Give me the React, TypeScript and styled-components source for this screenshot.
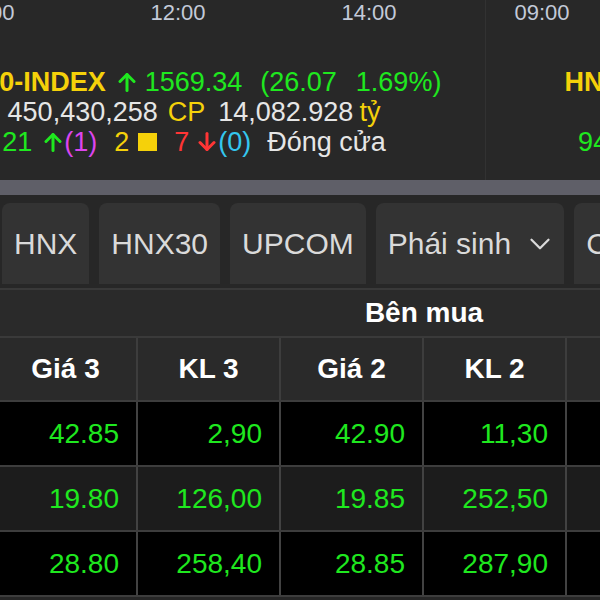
import styled, { createGlobalStyle } from 'styled-components';
import { ChevronDown } from 'lucide-react';

const GlobalStyle = createGlobalStyle`
  body {
    margin: 0;
    background: #262626;
    font-family: "Liberation Sans", Arial, sans-serif;
  }
`;

const YELLOW = '#f5d10a';
const GREEN = '#1fe81f';
const WHITE = '#e6e6e6';
const RED = '#ff3535';
const MAGENTA = '#dc45ee';
const CYAN = '#34c6ee';

const Page = styled.div`
  width: 600px;
  height: 600px;
  overflow: hidden;
  background: #262626;
`;

const Boards = styled.div`
  display: flex;
  height: 180px;
  background: #282828;
`;

const IndexPanel = styled.div<{ $width: number; $offset?: number; $divider?: boolean }>`
  flex-shrink: 0;
  width: ${p => p.$width}px;
  margin-left: ${p => p.$offset ?? 0}px;
  border-left: ${p => (p.$divider ? '1px solid #323232' : 'none')};
  display: flex;
  flex-direction: column;
`;

const Axis = styled.svg`
  display: block;
  height: 26px;
  font-size: 22px;
  fill: #c3cad8;
`;

const Info = styled.div`
  margin-top: 41px;
  display: flex;
  flex-direction: column;
  align-items: center;
  font-size: 27px;
  line-height: 30px;
`;

const Line = styled.div`
  display: flex;
  align-items: center;
  white-space: nowrap;
`;

const Seg = styled.span<{ $color: string; $ml?: number; $bold?: boolean }>`
  color: ${p => p.$color};
  margin-left: ${p => p.$ml ?? 0}px;
  font-weight: ${p => (p.$bold ? 700 : 400)};
`;

const ArrowBox = styled.svg<{ $ml?: number }>`
  display: block;
  flex-shrink: 0;
  margin-left: ${p => p.$ml ?? 0}px;
`;

const Square = styled.span<{ $ml?: number }>`
  display: block;
  width: 19px;
  height: 18px;
  background: ${YELLOW};
  margin-left: ${p => p.$ml ?? 0}px;
`;

const ScrollTrack = styled.div`
  height: 15px;
  background: #5f5f68;
`;

const TabBar = styled.div`
  display: flex;
  gap: 10px;
  padding: 8px 0 4px 2px;
  background: #272727;
  border-bottom: 2px solid #393939;
`;

const Tab = styled.div`
  flex-shrink: 0;
  height: 81px;
  display: flex;
  align-items: center;
  gap: 12px;
  padding: 0 12px;
  background: #333333;
  border-radius: 8px 8px 0 0;
  color: #dadada;
  font-size: 30px;
  white-space: nowrap;

  svg {
    margin-right: -5px;
  }
`;

const Table = styled.div`
  margin-left: -5px;
  width: 858px;
  background: #2a2a2a;
`;

const GroupRow = styled.div`
  height: 46px;
  display: flex;
  align-items: center;
  justify-content: center;
  border-bottom: 2px solid #3a3a3a;
  color: #ffffff;
  font-size: 28px;
  font-weight: 700;
`;

const Row = styled.div<{ $bg: string; $height: number }>`
  display: flex;
  height: ${p => p.$height}px;
  background: ${p => p.$bg};
  border-bottom: 2px solid #3d3d3d;
`;

const HeadCell = styled.div`
  box-sizing: border-box;
  width: 143px;
  flex-shrink: 0;
  border-right: 2px solid #3d3d3d;
  display: flex;
  align-items: center;
  justify-content: center;
  color: #ffffff;
  font-size: 28px;
  font-weight: 700;
`;

const Cell = styled.div`
  box-sizing: border-box;
  width: 143px;
  flex-shrink: 0;
  border-right: 2px solid #424242;
  display: flex;
  align-items: center;
  justify-content: flex-end;
  padding-right: 17px;
  color: ${GREEN};
  font-size: 28px;
`;

function Arrow({ dir, color, ml }: { dir: 'up' | 'down'; color: string; ml?: number }) {
  return (
    <ArrowBox $ml={ml} width="18" height="20" viewBox="0 0 18 20" fill="none" stroke={color}
      strokeWidth="3" strokeLinecap="round" strokeLinejoin="round"
      style={{ transform: dir === 'down' ? 'rotate(180deg)' : undefined }}>
      <path d="M9 18.5V2.5" />
      <path d="M2 9.5 9 2.5l7 7" />
    </ArrowBox>
  );
}

type Board = {
  width: number;
  offset?: number;
  divider?: boolean;
  ticks: { x: number; label: string }[];
  name: string;
  value: string;
  change: string;
  pct: string;
  volume: string;
  turnover: string;
  up: string;
  ceil: string;
  flat: string;
  down: string;
  floor: string;
};

const boards: Board[] = [
  {
    width: 582, offset: -97,
    ticks: [{ x: 84, label: '10:00' }, { x: 275, label: '12:00' }, { x: 466, label: '14:00' }],
    name: 'VN30-INDEX', value: '1569.34', change: '(26.07', pct: '1.69%)',
    volume: '450,430,258', turnover: '14,082.928',
    up: '21', ceil: '(1)', flat: '2', down: '7', floor: '(0)',
  },
  {
    width: 611, divider: true,
    ticks: [{ x: 56, label: '09:00' }, { x: 247, label: '11:00' }, { x: 438, label: '14:00' }],
    name: 'HNX-INDEX', value: '245.31', change: '(2.15', pct: '0.88%)',
    volume: '85,120,400', turnover: '1,820.450',
    up: '94', ceil: '(3)', flat: '52', down: '110', floor: '(2)',
  },
];

const rows = [
  ['42.85', '2,90', '42.90', '11,30', '42.95', '8,40'],
  ['19.80', '126,00', '19.85', '252,50', '19.90', '310,20'],
  ['28.80', '258,40', '28.85', '287,90', '28.90', '145,60'],
];

const heads = ['Giá 3', 'KL 3', 'Giá 2', 'KL 2', 'Giá 1', 'KL 1'];

export default function App() {
  return (
    <Page>
      <GlobalStyle />
      <Boards>
        {boards.map(b => (
          <IndexPanel key={b.name} $width={b.width} $offset={b.offset} $divider={b.divider}>
            <Axis width={b.width}>
              {b.ticks.map(t => (
                <text key={t.label} x={t.x} y={20} textAnchor="middle">{t.label}</text>
              ))}
            </Axis>
            <Info>
              <Line>
                <Seg $color={YELLOW} $bold>{b.name}</Seg>
                <Arrow dir="up" color={GREEN} ml={12} />
                <Seg $color={GREEN} $ml={9}>{b.value}</Seg>
                <Seg $color={GREEN} $ml={18}>{b.change}</Seg>
                <Seg $color={GREEN} $ml={19}>{b.pct}</Seg>
              </Line>
              <Line>
                <Seg $color={WHITE}>{b.volume}</Seg>
                <Seg $color={YELLOW} $ml={10}>CP</Seg>
                <Seg $color={WHITE} $ml={13}>{b.turnover}</Seg>
                <Seg $color={YELLOW} $ml={6}>tỷ</Seg>
              </Line>
              <Line>
                <Seg $color={GREEN}>{b.up}</Seg>
                <Arrow dir="up" color={GREEN} ml={12} />
                <Seg $color={MAGENTA} $ml={2}>{b.ceil}</Seg>
                <Seg $color={YELLOW} $ml={17}>{b.flat}</Seg>
                <Square $ml={9} />
                <Seg $color={RED} $ml={17}>{b.down}</Seg>
                <Arrow dir="down" color={RED} ml={9} />
                <Seg $color={CYAN} $ml={2}>{b.floor}</Seg>
                <Seg $color={WHITE} $ml={16}>Đóng cửa</Seg>
              </Line>
            </Info>
          </IndexPanel>
        ))}
      </Boards>
      <ScrollTrack />
      <TabBar>
        <Tab>HNX</Tab>
        <Tab>HNX30</Tab>
        <Tab>UPCOM</Tab>
        <Tab>
          Phái sinh
          <ChevronDown size={34} strokeWidth={1.6} />
        </Tab>
        <Tab>Chứng quyền</Tab>
      </TabBar>
      <Table>
        <GroupRow>Bên mua</GroupRow>
        <Row $bg="#2a2a2a" $height={62}>
          {heads.map(h => <HeadCell key={h}>{h}</HeadCell>)}
        </Row>
        {rows.map((r, i) => (
          <Row key={i} $bg={i % 2 === 1 ? '#1c1c1c' : '#000000'} $height={63}>
            {r.map((v, j) => <Cell key={j}>{v}</Cell>)}
          </Row>
        ))}
      </Table>
    </Page>
  );
}
